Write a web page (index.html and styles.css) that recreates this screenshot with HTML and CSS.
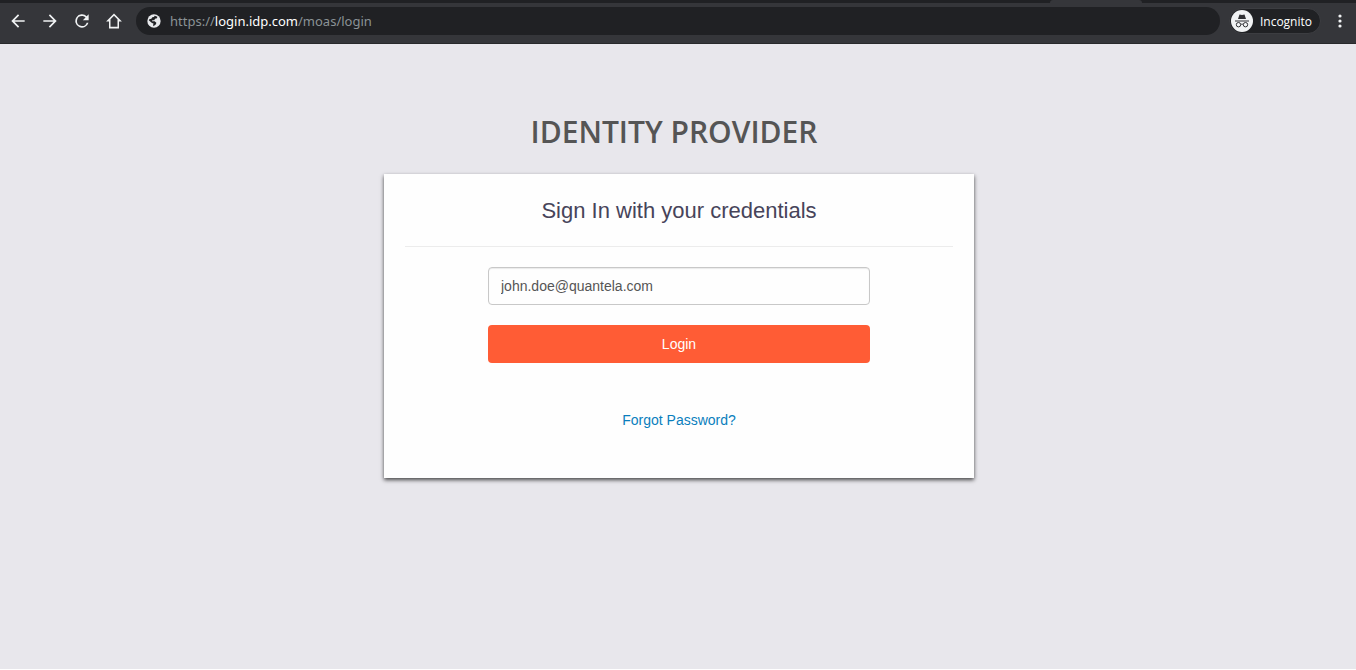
FILE: index.html
```html
<!DOCTYPE html>
<html lang="en">
<head>
    <meta charset="UTF-8">
    <meta name="viewport" content="width=device-width, initial-scale=1.0">
    <title>Identity Provider</title>
    <link rel="stylesheet" href="styles.css">
</head>
<body>
    <header class="browser">
        <div class="tab-strip"><span class="active-tab"></span></div>
        <div class="toolbar">
            <button type="button" class="nav-button" aria-label="Back">
                <svg viewBox="0 0 24 24"><path d="M20 11H7.800l5.600-5.600L12 4l-8 8 8 8 1.400-1.400L7.800 13H20z"/></svg>
            </button>
            <button type="button" class="nav-button" aria-label="Forward">
                <svg viewBox="0 0 24 24"><path d="M4 11h12.200l-5.600-5.600L12 4l8 8-8 8-1.400-1.400 5.600-5.600H4z"/></svg>
            </button>
            <button type="button" class="nav-button" aria-label="Reload">
                <svg viewBox="0 0 24 24"><path d="M17.650 6.350A8 8 0 1 0 19.730 14h-2.080A6 6 0 1 1 12 6c1.660 0 3.140.690 4.220 1.780L13 11h7V4z"/></svg>
            </button>
            <button type="button" class="nav-button" aria-label="Home">
                <svg viewBox="0 0 24 24"><path d="M12 3 2.500 12.500H6V21h12v-8.500h3.500zm0 2.800 4.200 4.200V19H7.800v-9z"/></svg>
            </button>
            <div class="address-bar">
                <svg viewBox="0 0 24 24">
                    <circle cx="12" cy="12" r="10"/>
                    <path class="land" d="M13 4.200 17 5.500 16.500 8 13.500 8.500 12.500 11H9.500L9 12.500H13L15.500 14.500 15 17 13 18.500 11.500 19.800 10.500 18 11.500 16 8.500 14.500 4.200 11 5 9.500 8 8.500 9.500 6.500 12 6z"/>
                </svg>
                <a class="url" href="https://login.idp.com/moas/login">https://<span class="host">login.idp.com</span>/moas/login</a>
            </div>
            <button type="button" class="incognito">
                <svg viewBox="0 0 22 22">
                    <circle class="badge" cx="11" cy="11" r="11"/>
                    <path d="M8.500 4.500 11 5l2.500-.5L15 9H7zM4 10.500h14v1H4z"/>
                    <path class="glasses" d="M10 14.500c.6-.5 1.400-.5 2 0"/>
                    <circle class="glasses" cx="7.500" cy="14.700" r="2.200"/>
                    <circle class="glasses" cx="14.500" cy="14.700" r="2.200"/>
                </svg>
                Incognito
            </button>
            <button type="button" class="menu-button" aria-label="Menu">
                <svg viewBox="0 0 4 14"><circle cx="2" cy="2" r="1.600"/><circle cx="2" cy="7" r="1.600"/><circle cx="2" cy="12" r="1.600"/></svg>
            </button>
        </div>
    </header>

    <main class="page">
        <h1 class="title">IDENTITY PROVIDER</h1>
        <section class="card">
            <h2 class="card-title">Sign In with your credentials</h2>
            <form class="login-form">
                <input type="text" class="username" aria-label="Username" value="john.doe@quantela.com">
                <button type="submit" class="login-button">Login</button>
                <a href="#forgot" class="forgot">Forgot Password?</a>
            </form>
        </section>
    </main>
</body>
</html>
```
FILE: styles.css
```css
* {
    box-sizing: border-box;
}

html {
    background-color: #fff;
}

body {
    margin: 0;
    min-height: 100vh;
    display: flex;
    flex-direction: column;
    font-family: "Liberation Sans", Arial, sans-serif;
    font-size: 14px;
}

button {
    margin: 0;
    padding: 0;
    border: 0;
    background: none;
    font-family: inherit;
    cursor: pointer;
}

/* Browser bar */
.browser {
    background-color: #35363a;
    border-bottom: 1px solid #28292b;
    font-family: "Noto Sans", sans-serif;
}

.tab-strip {
    height: 3px;
    background-color: #202124;
    display: flex;
    justify-content: flex-end;
}

.active-tab {
    width: 92px;
    margin-right: 214px;
    border-radius: 3px 3px 0 0;
    background-color: #35363a;
}

.toolbar {
    display: flex;
    align-items: center;
    padding: 4px 8px 8px 2px;
}

.nav-button {
    width: 32px;
    height: 28px;
    display: flex;
    align-items: center;
    justify-content: center;
}

.nav-button svg {
    width: 20px;
    height: 20px;
    fill: #f1f3f4;
}

.address-bar {
    flex: 1;
    height: 28px;
    margin: 0 9px 0 6px;
    padding: 0 10px;
    border-radius: 14px;
    background-color: #202124;
    display: flex;
    align-items: center;
    gap: 8px;
}

.address-bar svg {
    width: 16px;
    height: 16px;
    fill: #e8eaed;
}

.address-bar .land {
    fill: #202124;
}

.url {
    color: #8b9396;
    font-size: 13px;
    text-decoration: none;
}

.host {
    color: #fff;
}

.incognito {
    height: 26px;
    padding: 0 8px 0 1px;
    border: 1px solid #3c3d41;
    border-radius: 13px;
    background-color: #202124;
    color: #fff;
    font-family: "Open Sans", sans-serif;
    font-size: 12px;
    display: flex;
    align-items: center;
    gap: 7px;
}

.incognito svg {
    width: 22px;
    height: 22px;
    fill: #303134;
}

.incognito .badge {
    fill: #f1f3f4;
}

.incognito .glasses {
    fill: none;
    stroke: #303134;
}

.menu-button {
    width: 16px;
    height: 28px;
    margin-left: 11px;
    display: flex;
    align-items: center;
    justify-content: center;
}

.menu-button svg {
    width: 4px;
    height: 14px;
    fill: #f1f3f4;
}

/* Login page */
.page {
    flex: 1;
    margin-bottom: 1px;
    padding: 68px 20px 20px 22px;
    background-color: #e8e7ec;
}

.title {
    margin: 0 0 22px;
    padding-right: 10px;
    color: #555;
    font-family: "Open Sans", sans-serif;
    font-size: 30px;
    font-weight: 600;
    line-height: 40px;
    text-align: center;
}

.card {
    max-width: 590px;
    margin: 0 auto;
    padding: 20px 21px 48px;
    background-color: #fefefe;
    box-shadow: 0 2px 4px rgba(0, 0, 0, 0.7);
}

.card-title {
    margin: 0 0 20px;
    padding-bottom: 18px;
    border-bottom: 1px solid #ececec;
    color: #47445a;
    font-size: 22px;
    font-weight: normal;
    line-height: 34px;
    text-align: center;
}

.login-form {
    max-width: 382px;
    margin: 0 auto;
    display: flex;
    flex-direction: column;
    gap: 20px;
}

.username {
    width: 100%;
    height: 38px;
    padding: 0 12px;
    border: 1px solid #c8c8c8;
    border-radius: 4px;
    background-color: #fefefe;
    box-shadow: inset 0 1px 1px rgba(0, 0, 0, 0.08);
    color: #555;
    font-family: inherit;
    font-size: 14px;
}

.login-button {
    height: 38px;
    border-radius: 4px;
    background-color: #ff5c35;
    color: #fff;
    font-size: 14px;
}

.forgot {
    align-self: center;
    margin-top: 27px;
    color: #0a7ebd;
    line-height: 20px;
    text-decoration: none;
}

.forgot:hover {
    text-decoration: underline;
}
```
